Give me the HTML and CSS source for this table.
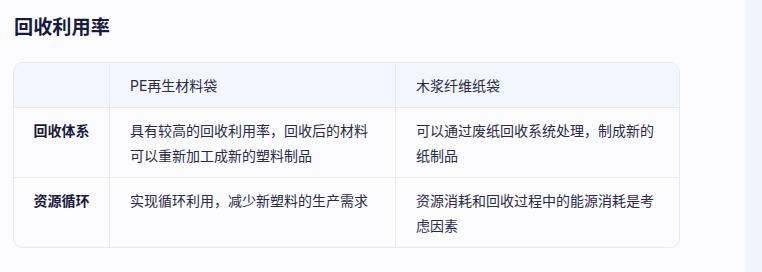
FILE: index.html
```html
<!DOCTYPE html>
<html lang="zh-CN">
<head>
<meta charset="utf-8">
<title>回收利用率</title>
<link rel="stylesheet" href="styles.css">
</head>
<body>
<div class="page">
  <main class="main">
    <h2 class="title">回收利用率</h2>
    <table class="compare">
      <colgroup>
        <col class="c-label">
        <col class="c-a">
        <col class="c-b">
      </colgroup>
      <thead>
        <tr>
          <th class="corner"></th>
          <th>PE再生材料袋</th>
          <th>木浆纤维纸袋</th>
        </tr>
      </thead>
      <tbody>
        <tr>
          <td class="label">回收体系</td>
          <td>具有较高的回收利用率，回收后的材料可以重新加工成新的塑料制品</td>
          <td>可以通过废纸回收系统处理，制成新的纸制品</td>
        </tr>
        <tr>
          <td class="label">资源循环</td>
          <td>实现循环利用，减少新塑料的生产需求</td>
          <td>资源消耗和回收过程中的能源消耗是考虑因素</td>
        </tr>
      </tbody>
    </table>
  </main>
  <aside class="side"></aside>
</div>
</body>
</html>
```
FILE: styles.css
```css
html, body {
  margin: 0;
  padding: 0;
}
body {
  background: #fcfcfe;
  font-family: Inter, "Noto Sans CJK SC", sans-serif;
  color: #2a2a48;
}
.page {
  display: flex;
  min-height: 272px;
}
.main {
  flex: 1;
  padding: 0 13px;
}
.side {
  width: 16px;
  background: #f2f4fb;
}
.title {
  margin: 14px 0 22px 1px;
  font-size: 19.2px;
  line-height: 26px;
  font-weight: 700;
  color: #1a1a3c;
}
.compare {
  width: 667px;
  border-collapse: separate;
  border-spacing: 0;
  border: 1px solid #e7e9f1;
  border-radius: 10px;
  overflow: hidden;
  table-layout: fixed;
  font-size: 14px;
  line-height: 25px;
  background: #fcfcfe;
}
.c-label { width: 96px; }
.c-a { width: 286px; }
.c-b { width: auto; }
.compare th,
.compare td {
  padding: 9.5px 20px;
  text-align: left;
  vertical-align: top;
  border-right: 1px solid #e7e9f1;
  border-bottom: 1px solid #e7e9f1;
}
.compare th:last-child,
.compare td:last-child {
  border-right: none;
}
.compare tbody tr:last-child td {
  border-bottom: none;
}
.compare thead th {
  background: #f4f6fe;
  font-weight: 400;
  color: #2a2a48;
}
.compare td.label {
  padding-left: 0;
  padding-right: 0;
  text-align: center;
  white-space: nowrap;
  font-weight: 700;
  color: #1a1a3c;
}
```
